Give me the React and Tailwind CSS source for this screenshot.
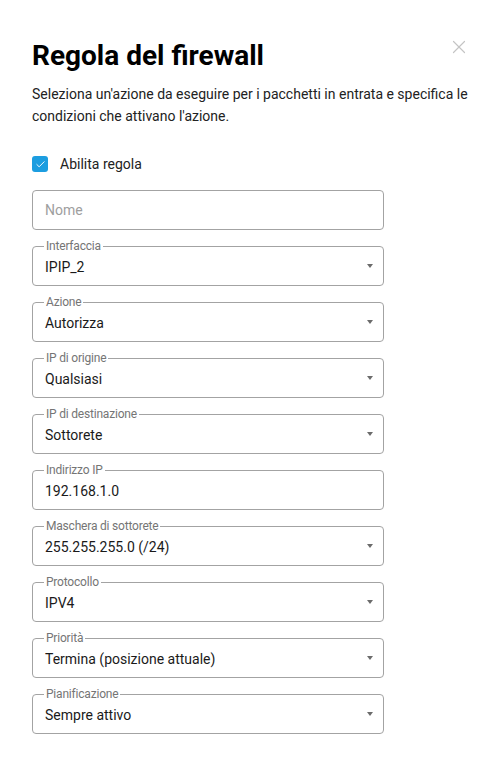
import { Check, X } from 'lucide-react';

const fields = [
  { label: 'Interfaccia', value: 'IPIP_2', select: true },
  { label: 'Azione', value: 'Autorizza', select: true },
  { label: 'IP di origine', value: 'Qualsiasi', select: true },
  { label: 'IP di destinazione', value: 'Sottorete', select: true },
  { label: 'Indirizzo IP', value: '192.168.1.0', select: false },
  { label: 'Maschera di sottorete', value: '255.255.255.0 (/24)', select: true },
  { label: 'Protocollo', value: 'IPV4', select: true },
  { label: 'Priorità', value: 'Termina (posizione attuale)', select: true },
  { label: 'Pianificazione', value: 'Sempre attivo', select: true },
];

const Field = ({ label, value, select }) => (
  <div className="relative flex h-10 w-[352px] items-center rounded border border-[#a3a3a3] pl-3 pr-[10px]">
    <span className="absolute -top-[9px] left-[11px] bg-white px-[2px] text-xs leading-4 tracking-[-0.2px] text-[#757575]">
      {label}
    </span>
    <span className="flex-1 pt-[2px] text-sm text-[#1a1a1a]">{value}</span>
    {select && (
      <svg width="6" height="4" viewBox="0 0 6 4" className="fill-[#6b6b6b]">
        <path d="M0 0h6L3 4z" />
      </svg>
    )}
  </div>
);

const App = () => {
  return (
    <div className="relative min-h-screen bg-white pl-8 pr-7 pt-[38px] font-['Roboto',sans-serif]">
      <button className="absolute right-[30px] top-[36px] text-[#c4c4c4]">
        <X size={22} strokeWidth={1.3} />
      </button>

      <h1 className="text-[28px] font-bold leading-9 text-black">Regola del firewall</h1>
      <p className="mt-[9px] text-sm leading-[22px] text-[#222]">
        Seleziona un'azione da eseguire per i pacchetti in entrata e specifica le condizioni che attivano l'azione.
      </p>

      <label className="mt-[27px] flex items-center gap-3">
        <span className="flex h-4 w-4 items-center justify-center rounded-[3px] bg-[#1c9de0]">
          <Check size={11} strokeWidth={2} className="text-white" />
        </span>
        <span className="text-sm text-[#222]">Abilita regola</span>
      </label>

      <div className="mt-4 flex flex-col gap-4 pb-8">
        <div className="flex h-10 w-[352px] items-center rounded border border-[#a3a3a3] px-3">
          <span className="text-sm text-[#9e9e9e]">Nome</span>
        </div>
        {fields.map((f) => (
          <Field key={f.label} {...f} />
        ))}
      </div>
    </div>
  );
};

export default App;
